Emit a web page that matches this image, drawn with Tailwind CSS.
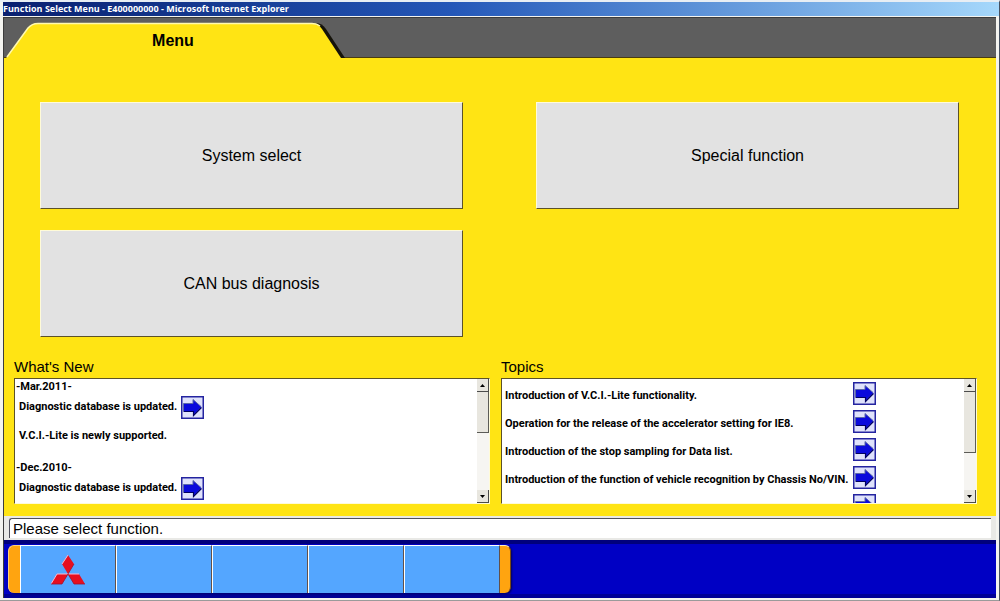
<!DOCTYPE html>
<html lang="en">
<head>
<meta charset="utf-8">
<title>Function Select Menu</title>
<script src="https://cdn.jsdelivr.net/npm/@tailwindcss/browser@4"></script>
</head>
<body class="bg-[#f4f4f0] font-['Liberation_Sans',sans-serif] text-black">
<svg class="hidden" aria-hidden="true">
  <symbol id="arrow" viewBox="0 0 23 23">
    <rect x="0.75" y="0.75" width="21.5" height="21.5" fill="#dfe2fb" stroke="#2424a0" stroke-width="1.5"/>
    <path d="M2.500 7.500H12V3.500L20.500 11L12.500 19V15H2.500z" fill="#0a0adc"/>
    <path d="M2.500 15V7.500H12V3.500L20 10.500" fill="none" stroke="#5a68a8" stroke-width="1"/>
    <path d="M2.500 15.500H12.500V19.500L20.500 11.500" fill="none" stroke="#000060" stroke-width="1.200"/>
  </symbol>
</svg>
<div class="flex min-h-screen flex-col border-t-2 border-r border-b border-[#e8eef4] border-r-[#455060] border-b-[#9a9a9a]">
  <header class="ml-[3px] flex h-[14px] items-center bg-linear-to-r from-[#0a2070] via-[#2457b8] via-45% to-[#a6d8fb] font-['Open_Sans',sans-serif] text-[9px] leading-[14px] font-bold text-white">
    <h1>Function Select Menu - E400000000 - Microsoft Internet Explorer</h1>
  </header>
  <div class="mx-[3px] mt-px mb-[2px] flex flex-1 flex-col border-t border-l border-[#3c3c3c]">
    <nav class="flex h-10 border-b border-[#4a3c10] bg-[#5e5e5e]">
      <div class="relative h-10 w-[342px]">
        <svg class="absolute inset-0 h-10 w-[342px]" viewBox="0 0 342 40" aria-hidden="true">
          <path d="M312 5Q318 5 322 11L341 40H332z" fill="#15130a"/>
          <path d="M2 40L24 10Q28 5 34 5H308Q314 5 318 11L337 40z" fill="#ffe414"/>
          <path d="M3 39L24 10Q28 5.500 34 5.500H308Q313 5.500 316 8" fill="none" stroke="#fff9b0" stroke-width="1.500"/>
        </svg>
        <a href="#" class="relative block pt-[13px] pr-1 text-center text-base leading-5 font-bold">Menu</a>
      </div>
    </nav>
    <main class="flex flex-1 flex-col bg-[#ffe414] pb-3">
      <div class="grid grid-cols-2 gap-x-[73px] gap-y-[21px] pt-11 pr-[37px] pl-9 text-base">
        <button class="h-[107px] border border-t-[#fffbd8] border-r-[#5c5228] border-b-[#5c5228] border-l-[#fffbd8] bg-[#e2e2e2]">System select</button>
        <button class="h-[107px] border border-t-[#fffbd8] border-r-[#5c5228] border-b-[#5c5228] border-l-[#fffbd8] bg-[#e2e2e2]">Special function</button>
        <button class="h-[107px] border border-t-[#fffbd8] border-r-[#5c5228] border-b-[#5c5228] border-l-[#fffbd8] bg-[#e2e2e2]">CAN bus diagnosis</button>
      </div>
      <div class="mt-5 grid grid-cols-2 gap-x-[11px] pr-[19px] pl-[10px]">
        <section>
          <h2 class="pb-[2px] text-[15px] leading-[19px]">What's New</h2>
          <div class="flex h-[126px] overflow-hidden border border-t-[#5c5228] border-r-[#fffbd8] border-b-[#fffbd8] border-l-[#5c5228] bg-white">
            <div class="flex-1 font-['Roboto','Liberation_Sans',sans-serif] text-[11px] leading-4 font-bold">
              <h3 class="pl-px">-Mar.2011-</h3>
              <p class="flex h-6 items-center gap-1 pl-1">Diagnostic database is updated. <a href="#" aria-label="Open database update"><svg class="size-[23px]"><use href="#arrow"/></svg></a></p>
              <p class="mt-[5px] pl-1 leading-6">V.C.I.-Lite is newly supported.</p>
              <h3 class="mt-3 pl-px">-Dec.2010-</h3>
              <p class="flex h-6 items-center gap-1 pl-1">Diagnostic database is updated. <a href="#" aria-label="Open database update"><svg class="size-[23px]"><use href="#arrow"/></svg></a></p>
            </div>
            <div class="flex w-3 flex-col bg-[#f6f5f2]">
              <button aria-label="Scroll up" class="flex h-[13px] items-center justify-center border-r border-b border-[#4c4c4c] bg-[#e8e6df]"><svg class="h-[3px] w-[5px]" viewBox="0 0 5 3"><path d="M0 3L2.500 0L5 3z"/></svg></button>
              <div class="h-[41px] border-r border-b border-[#5c5c58] bg-[#e8e6df]"></div>
              <button aria-label="Scroll down" class="mt-auto flex h-[13px] items-center justify-center border-r border-b border-[#4c4c4c] bg-[#e8e6df]"><svg class="h-[3px] w-[5px]" viewBox="0 0 5 3"><path d="M0 0L2.500 3L5 0z"/></svg></button>
            </div>
          </div>
        </section>
        <section>
          <h2 class="pb-[2px] text-[15px] leading-[19px]">Topics</h2>
          <div class="flex h-[126px] overflow-hidden border border-t-[#5c5228] border-r-[#fffbd8] border-b-[#fffbd8] border-l-[#5c5228] bg-white">
            <ul class="flex-1 pt-[3px] pl-[3px] font-['Roboto','Liberation_Sans',sans-serif] text-[11px] font-bold whitespace-nowrap">
              <li class="flex h-7 items-start leading-[27px]"><span class="w-[348px]">Introduction of V.C.I.-Lite functionality.</span><a href="#" aria-label="Open topic"><svg class="size-[23px]"><use href="#arrow"/></svg></a></li>
              <li class="flex h-7 items-start leading-[27px]"><span class="w-[348px]">Operation for the release of the accelerator setting for IE8.</span><a href="#" aria-label="Open topic"><svg class="size-[23px]"><use href="#arrow"/></svg></a></li>
              <li class="flex h-7 items-start leading-[27px]"><span class="w-[348px]">Introduction of the stop sampling for Data list.</span><a href="#" aria-label="Open topic"><svg class="size-[23px]"><use href="#arrow"/></svg></a></li>
              <li class="flex h-7 items-start leading-[27px]"><span class="w-[348px]">Introduction of the function of vehicle recognition by Chassis No/VIN.</span><a href="#" aria-label="Open topic"><svg class="size-[23px]"><use href="#arrow"/></svg></a></li>
              <li class="flex h-7 items-start"><span class="w-[348px]"></span><a href="#" aria-label="Open topic"><svg class="size-[23px]"><use href="#arrow"/></svg></a></li>
            </ul>
            <div class="flex w-3 flex-col bg-[#f6f5f2]">
              <button aria-label="Scroll up" class="flex h-[13px] items-center justify-center border-r border-b border-[#4c4c4c] bg-[#e8e6df]"><svg class="h-[3px] w-[5px]" viewBox="0 0 5 3"><path d="M0 3L2.500 0L5 3z"/></svg></button>
              <div class="h-[61px] border-r border-b border-[#5c5c58] bg-[#e8e6df]"></div>
              <button aria-label="Scroll down" class="mt-auto flex h-[13px] items-center justify-center border-r border-b border-[#4c4c4c] bg-[#e8e6df]"><svg class="h-[3px] w-[5px]" viewBox="0 0 5 3"><path d="M0 0L2.500 3L5 0z"/></svg></button>
            </div>
          </div>
        </section>
      </div>
    </main>
    <div class="bg-[#e9e9e6] pt-[2px] pr-[5px] pb-[2px] pl-[5px]">
      <p role="status" class="h-5 rounded-tl-[3px] border-t border-l border-[#50505c] bg-white pl-[3px] text-[15px] leading-5">Please select function.</p>
    </div>
    <footer class="flex h-[58px] border-y-[4px] border-t-[#00007c] border-b-[#000096] bg-[#0000c4] pl-1">
      <div class="my-px flex h-[48px] rounded-[6px] shadow-[1px_1px_2px_#000060]">
        <div class="w-3 rounded-l-[6px] border-t border-l border-[#ffd27a] bg-[#ffa410]"></div>
        <button aria-label="Home" class="flex w-24 items-center justify-center border-t border-r border-l border-t-white border-r-[#62504a] border-l-white bg-[#54a6ff]">
          <svg class="h-[31px] w-[34px]" viewBox="0 0 34 31" aria-hidden="true"><g fill="#e60f20"><path d="M17 1L23 10L17 20L11 10z"/><path d="M17 20L11 30H0L6 20z"/><path d="M17 20H28L34 30H23z"/></g><path d="M11 10L17 1M0 30L6 20H17M17 20H28" fill="none" stroke="#f6b8d0"/><path d="M23 10L17 20L11 30H0M17 20L23 30H34" fill="none" stroke="#a01030" stroke-width=".8"/></svg>
        </button>
        <button aria-label="Empty slot 1" class="w-24 border-t border-r border-l border-t-white border-r-[#62504a] border-l-white bg-[#54a6ff]"></button>
        <button aria-label="Empty slot 2" class="w-24 border-t border-r border-l border-t-white border-r-[#62504a] border-l-white bg-[#54a6ff]"></button>
        <button aria-label="Empty slot 3" class="w-24 border-t border-r border-l border-t-white border-r-[#62504a] border-l-white bg-[#54a6ff]"></button>
        <button aria-label="Empty slot 4" class="w-24 border-t border-r border-l border-t-white border-r-[#62504a] border-l-white bg-[#54a6ff]"></button>
        <div class="w-[11px] rounded-r-[6px] border-t border-r border-t-[#fff0c0] border-r-[#7a4a10] bg-[#ffa410]"></div>
      </div>
    </footer>
  </div>
</div>
</body>
</html>
